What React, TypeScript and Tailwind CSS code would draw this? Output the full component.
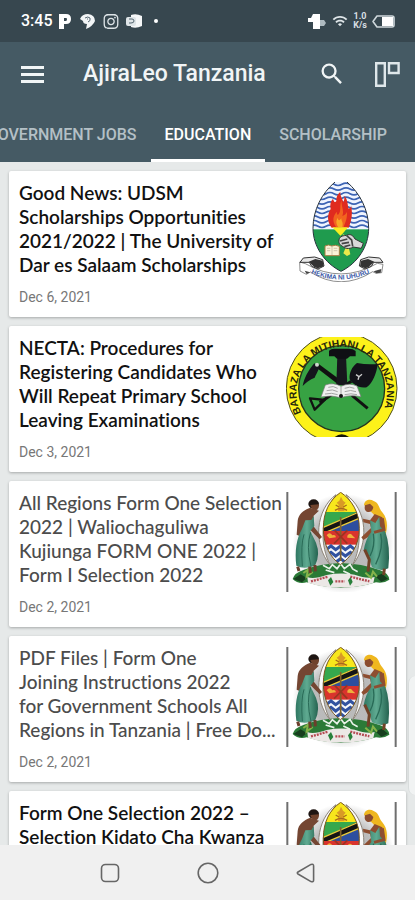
import { MdSearch, MdWifi } from "react-icons/md";
import { FaInstagram } from "react-icons/fa";

const tabs = ["GOVERNMENT JOBS", "EDUCATION", "SCHOLARSHIP"];

const posts = [
  {
    title: "Good News: UDSM\nScholarships Opportunities\n2021/2022 | The University of\nDar es Salaam Scholarships",
    date: "Dec 6, 2021",
    image: "udsm",
    read: false,
  },
  {
    title: "NECTA: Procedures for\nRegistering Candidates Who\nWill Repeat Primary School\nLeaving Examinations",
    date: "Dec 3, 2021",
    image: "necta",
    read: false,
  },
  {
    title: "All Regions Form One Selection\n2022 | Waliochaguliwa\nKujiunga FORM ONE 2022 |\nForm I Selection 2022",
    date: "Dec 2, 2021",
    image: "arms",
    read: true,
  },
  {
    title: "PDF Files | Form One\nJoining Instructions 2022\nfor Government Schools All\nRegions in Tanzania | Free Do...",
    date: "Dec 2, 2021",
    image: "arms",
    read: true,
  },
  {
    title: "Form One Selection 2022 –\nSelection Kidato Cha Kwanza",
    date: "",
    image: "arms",
    read: false,
  },
];

const UdsmLogo = () => (
  <svg viewBox="18 51 336 300" className="my-px h-[100px] w-28 shrink-0" aria-hidden="true">
    <defs>
      <clipPath id="udsm-shield">
        <path d="M183 38 C130 75 99 130 99 190 C99 245 135 295 183 319 C232 295 266 245 266 190 C266 130 236 75 183 38Z" />
      </clipPath>
    </defs>
    <g clipPath="url(#udsm-shield)">
      <rect x="90" y="30" width="185" height="165" fill="#f0f5ff" />
      {[58, 72, 86, 100, 114, 128, 142, 156, 170, 184].map((y) => (
        <path
          key={y}
          d={`M90 ${y} q12 -7 24 0 t24 0 t24 0 t24 0 t24 0 t24 0 t24 0 t24 0`}
          fill="none"
          stroke="#3c63b4"
          strokeWidth="5"
        />
      ))}
      <rect x="90" y="193" width="185" height="130" fill="#1f9b4e" />
    </g>
    <path
      d="M165 51 C125 85 99 135 99 190 C99 245 135 295 183 319 C232 295 266 245 266 190 C266 135 240 85 201 51"
      fill="none"
      stroke="#27323d"
      strokeWidth="3"
    />
    {/* torch flame */}
    <path
      d="M155 188 C140 168 142 148 152 132 C149 118 152 109 159 101 C162 112 166 114 169 108 C168 96 173 87 181 80 C180 94 187 98 190 112 C193 104 194 99 193 92 C204 103 202 119 206 131 C211 130 213 126 213 121 C219 146 214 170 206 188 Z"
      fill="#e02b1f"
    />
    <path d="M168 186 C155 166 160 153 170 140 C171 153 176 152 180 139 C182 127 180 118 184 106 C185 128 193 140 187 153 C194 150 198 147 201 141 C202 164 194 175 191 187Z" fill="#f2641f" />
    <path d="M175 187 C166 172 169 166 173 158 C174 167 179 168 184 160 C184 171 191 170 187 187Z" fill="#f9a825" />
    <path d="M157 187 L204 187 L187 207 L181 212Z" fill="#f7ee20" />
    <path d="M188 207 L198 212 L211 268 L201 273 L190 265 L199 243Z" fill="#e8e94a" />
    {/* hand holding the torch */}
    <path
      d="M178 221 C181 213 190 212 200 211 C213 205 220 213 225 222 L250 235 L244 250 L219 246 C208 254 192 250 187 243 C177 240 175 231 178 221Z"
      fill="#d8d8d8"
      stroke="#333"
      strokeWidth="3"
    />
    <path d="M180 228 L202 222 M185 236 L207 232 M193 245 L211 240 M200 212 L215 225 L218 244" fill="none" stroke="#444" strokeWidth="5" />
    {/* book */}
    <path d="M135 243 Q146 237 155 243 Q166 238 178 244 V272 H135Z" fill="#fbf3d8" stroke="#a67c42" strokeWidth="3" />
    <path d="M156 243 V270 M141 250 H151 M141 257 H151 M161 250 H172 M161 257 H172" stroke="#b9b09a" strokeWidth="2" />
    {/* ribbon */}
    <path
      d="M59 291 L76 296 Q183 358 292 295 L309 298 L305 323 L288 325 L278 320 Q183 380 91 321 L79 328 L60 318Z"
      fill="#fff"
      stroke="#555"
      strokeWidth="2"
    />
    <path d="M70 279 L104 276 L128 284 L132 303 L114 312 L95 304 L88 292 L60 292Z" fill="#e8e8e8" stroke="#333" strokeWidth="3" />
    <path d="M86 290 L106 282 L128 287 L131 304 L113 310 L103 306Z" fill="#333" />
    <path d="M299 279 L266 276 L242 284 L238 303 L255 312 L274 304 L281 292 L309 292Z" fill="#e8e8e8" stroke="#333" strokeWidth="3" />
    <path d="M243 287 L264 282 L283 290 L266 306 L256 310 L240 304Z" fill="#333" />
    <path d="M74 317 L90 322 L80 327Z M281 319 L304 312 L302 323 L289 325Z" fill="#444" />
    <path id="udsm-motto" d="M93 325 Q183 363 272 323" fill="none" />
    <text fill="#3d5aa8" className="font-['Liberation_Sans'] text-[20px] font-bold">
      <textPath href="#udsm-motto">HEKIMA NI UHURU</textPath>
    </text>
  </svg>
);

const NectaLogo = () => (
  <svg viewBox="18 43 336 300" className="my-px h-[100px] w-28 shrink-0" aria-hidden="true">
    <circle cx="185" cy="197" r="166" fill="#fdf21a" stroke="#4c4c20" strokeWidth="3" />
    <circle cx="185" cy="198" r="129" fill="#37a243" stroke="#24351f" strokeWidth="4" />
    <path id="necta-ring" d="M64 271 A136 136 0 1 1 306 271" fill="none" />
    <text fill="#27270c" className="font-['Liberation_Sans'] text-[31px] font-bold">
      <textPath href="#necta-ring">BARAZA LA MITIHANI LA TANZANIA</textPath>
    </text>
    {/* hoe */}
    <path d="M102 129 L112 121 L184 174 L176 186Z" fill="#111" />
    <path d="M68 190 C72 168 84 144 103 122 L119 134 C113 147 107 158 104 165 Q83 173 68 190Z" fill="#15151d" />
    <circle cx="111" cy="126" r="6" fill="#cfd8cf" />
    {/* spade */}
    <path d="M209 170 C207 151 216 132 231 121 Q261 127 293 124 C290 151 278 182 260 194 Q238 198 217 180Z" fill="#121219" />
    <path d="M228 156 L237 162 L246 155 M237 162 L234 171" stroke="#cfcfcf" strokeWidth="4" fill="none" />
    <path d="M214 176 L119 240" stroke="#111" strokeWidth="9" />
    <path d="M90 227 L134 232 L104 261Z" fill="none" stroke="#111" strokeWidth="7" strokeLinejoin="round" />
    <path d="M216 218 L263 257" stroke="#111" strokeWidth="9" />
    {/* hammer */}
    <path d="M172 99 H198 L202 187 H169Z" fill="#17171d" />
    <path d="M147 84 Q154 77 165 78 H206 Q220 78 227 85 V101 H210 L201 108 H171 L163 101 H147Z" fill="#0f0f14" />
    {/* open book */}
    <path d="M136 187 Q161 178 183 191 Q208 179 231 190 L243 222 Q208 215 183 225 Q153 216 123 223Z" fill="#efefef" stroke="#777" strokeWidth="2" />
    <path d="M183 191 V223 M145 194 Q160 188 173 197 M140 204 Q158 198 173 207 M135 214 Q156 209 173 216 M194 197 Q210 190 223 197 M194 207 Q213 200 228 207 M194 216 Q213 211 231 216" fill="none" stroke="#a4a4a4" strokeWidth="3" />
    <circle cx="183" cy="220" r="6" fill="#111" />
    <path d="M164 343 Q185 327 207 343Z" fill="#15150a" />
  </svg>
);

const CoatOfArms = () => (
  <svg viewBox="18 43 336 300" className="my-px h-[100px] w-28 shrink-0" aria-hidden="true">
    <defs>
      <clipPath id="arms-shield">
        <path d="M182 44 C148 67 130 104 130 152 C130 202 151 240 181 261 C212 240 238 202 238 152 C238 104 216 67 182 44Z" />
      </clipPath>
      <radialGradient id="arms-shade">
        <stop offset="60%" stopColor="#8d8d8d" />
        <stop offset="100%" stopColor="#ffffff" />
      </radialGradient>
      <linearGradient id="arms-dress">
        <stop offset="0%" stopColor="#2f7762" />
        <stop offset="50%" stopColor="#5faa91" />
        <stop offset="100%" stopColor="#256350" />
      </linearGradient>
    </defs>
    <ellipse cx="190" cy="198" rx="152" ry="150" fill="url(#arms-shade)" opacity="0.6" />
    <path d="M22 43 V343 M347 43 V343" stroke="#6f6f6f" strokeWidth="6" />
    {/* mountain and motto ribbon */}
    <path d="M38 304 Q43 285 72 276 Q120 258 182 256 Q245 258 299 277 Q326 286 328 306 Q310 319 288 314 Q182 346 80 314 Q54 320 38 304Z" fill="#2b7a37" />
    <path d="M40 304 L62 290 L80 301 L66 314Z M286 296 L306 288 L324 303 L304 313Z" fill="#173e1e" />
    <path d="M82 298 Q100 306 140 292 Q182 284 224 291 Q260 304 284 298 L280 316 Q230 331 182 329 Q130 331 84 315Z" fill="#ece8e6" />
    <path d="M93 311 L145 297 M211 297 L268 311 M166 311 H194" stroke="#b44b53" strokeWidth="7" strokeDasharray="6 3" />
    <path d="M144 308 L153 298 L160 313 L151 324Z M204 308 L212 298 L218 313 L210 324Z" fill="#28803b" />
    <path d="M129 263 L148 273 L157 261 L171 273 L182 258 L193 273 L210 260 L218 274 L233 282 M137 277 L163 285 M190 280 L210 290" stroke="#e9f2e9" strokeWidth="5" fill="none" />
    <path d="M70 286 L84 276 L80 297 L98 283 M256 285 L273 300 L279 282 L291 297" stroke="#85b34a" strokeWidth="6" fill="none" />
    {/* tusks */}
    <path d="M168 51 C108 95 97 198 151 263 C121 205 117 124 168 51Z" fill="#fafafa" stroke="#8d8478" strokeWidth="3" />
    <path d="M198 51 C262 95 269 198 217 263 C247 205 247 124 198 51Z" fill="#fafafa" stroke="#8d8478" strokeWidth="3" />
    {/* shield */}
    <g clipPath="url(#arms-shield)">
      <rect x="125" y="40" width="118" height="65" fill="#f8e71c" />
      <rect x="125" y="103" width="118" height="60" fill="#35a84d" />
      <path d="M125 163 L242 105 V165Z" fill="#2d4e9e" />
      <path d="M125 152 L242 98 V120 L125 171Z" fill="#151515" />
      <path d="M125 151 L242 101 M125 169 L242 120" stroke="#eacb3a" strokeWidth="4" />
      <rect x="125" y="160" width="118" height="43" fill="#d9332d" />
      <rect x="125" y="201" width="118" height="62" fill="#f5f7fb" />
      {[211, 230, 249].map((y) => (
        <path
          key={y}
          d={`M124 ${y - 6} l14 11 l15 -11 l14 11 l15 -11 l14 11 l15 -11 l14 11 l15 -11`}
          fill="none"
          stroke="#3152a0"
          strokeWidth="9"
        />
      ))}
      <path d="M140 173 q9 -12 17 0 q9 -4 11 6 l-20 3Z M202 174 q8 -12 16 0 l8 8 l-24 -2Z" fill="#efb13c" />
      <path d="M182 118 V250" stroke="#80622c" strokeWidth="5" />
      <path d="M162 198 L202 158 M164 158 L202 198" stroke="#9a3522" strokeWidth="5" />
    </g>
    <path d="M182 44 C148 67 130 104 130 152 C130 202 151 240 181 261 C212 240 238 202 238 152 C238 104 216 67 182 44Z" fill="none" stroke="#7a581e" strokeWidth="3" />
    <path d="M174 101 L176 81 L170 75 L178 69 L183 57 L189 69 L197 75 L191 82 L194 101Z" fill="#d99a25" />
    <path d="M165 98 Q183 86 201 98 M167 82 L177 88 M200 82 L190 88" stroke="#a86a1b" strokeWidth="4" fill="none" />
    {/* man */}
    <ellipse cx="101" cy="79" rx="16" ry="14" fill="#1e1512" />
    <path d="M91 82 Q95 98 108 98 Q118 94 117 80Z" fill="#70422c" />
    <path d="M91 90 C70 98 55 110 53 130 L50 171 L65 178 L91 157 L119 185 L126 178 L98 143 L101 114 L117 99 L107 96Z" fill="#744632" />
    <path d="M76 128 L66 154 C49 182 44 222 49 264 Q71 276 105 264 Q122 230 108 195 L91 160 L103 145 L101 115 L94 127Z" fill="url(#arms-dress)" />
    <path d="M72 170 Q62 200 67 266 M92 164 Q78 205 93 266" stroke="#296b57" strokeWidth="3" fill="none" />
    <path d="M89 267 L91 286 M105 262 L106 281 M53 267 L57 280" stroke="#6b3f2c" strokeWidth="9" />
    {/* woman */}
    <path d="M252 82 C253 67 270 62 281 70 C298 76 296 93 308 105 C322 122 324 145 317 169 L301 137 L279 108Z" fill="#efb71f" />
    <path d="M255 83 Q251 99 263 103 Q277 105 280 88 L270 78Z" fill="#8b4c2f" />
    <path d="M249 123 L270 128 L284 109 L307 119 L312 156 L294 159 L250 187 L244 179 L273 151 L270 139 L250 134Z" fill="#8d4e31" />
    <path d="M270 128 L286 136 L298 117 L300 146 L316 162 Q332 205 325 272 Q303 283 276 269 Q265 231 251 218 Q257 183 274 163Z" fill="url(#arms-dress)" />
    <path d="M302 168 Q312 210 287 260 M280 168 Q286 206 270 235" stroke="#296b57" strokeWidth="4" fill="none" />
    <path d="M307 122 L312 156 L282 164" stroke="#8d4e31" strokeWidth="9" fill="none" />
    <path d="M254 216 L268 246 L264 282 M313 273 L311 292" stroke="#724227" strokeWidth="9" fill="none" />
  </svg>
);

const PostImage = ({ name }: { name: string }) => {
  if (name === "udsm") return <UdsmLogo />;
  if (name === "necta") return <NectaLogo />;
  return <CoatOfArms />;
};

const StatusBar = () => (
  <div className="flex h-[42px] shrink-0 items-center justify-between bg-[#37474f] pr-5 pl-[21px] text-white">
    <div className="flex items-center">
      <span className="text-base font-medium">3:45</span>
      <svg viewBox="0 0 12 15" className="ml-[6px] h-[15px] w-3">
        <path fillRule="evenodd" d="M0 0 H7 Q12 0 12 5 Q12 10 7 10 H5 V15 H0Z M5 4 V7 H7 Q8 7 8 5 Q8 4 7 4Z" fill="#fff" />
      </svg>
      <svg viewBox="0 0 15 16" className="ml-[9px] h-4 w-[15px]">
        <path d="M0 6 Q2 1 8 1 Q15 2 15 8 Q13 13 6 16 L7 11 Q3 11 3 8Z" fill="#f2f5f6" />
        <path d="M5 5 Q8 3 10 5 Q11 8 8 9 M7 6 H8" stroke="#536570" strokeWidth="1" fill="none" />
      </svg>
      <FaInstagram className="ml-2 h-[17px] w-4 text-[#dce3e6]" />
      <svg viewBox="0 0 16 14" className="ml-[7px] h-[14px] w-4">
        <path d="M5 1 Q10 -1 16 2 V12 Q10 15 5 13Z" fill="#f5f7f8" />
        <rect y="3" width="10" height="9" rx="2" fill="#dfe5e8" />
        <path d="M3 5 H6 Q8 5 8 7 Q8 9 5 9 H3" stroke="#53656f" fill="none" />
      </svg>
      <span className="ml-3 h-1 w-1 rounded-full bg-white" />
    </div>
    <div className="flex items-center">
      <svg viewBox="0 0 18 15" className="h-[15px] w-[18px]">
        <path d="M5 0 H12 V15 H5 V8 H0 V4 H3Z" fill="#fff" />
        <path d="M12 6 H16 L18 9 L16 12 H12Z" fill="#aebac0" />
      </svg>
      <MdWifi className="ml-[6px] h-4 w-4 text-[#dfe6e9]" />
      <span className="ml-1 w-4 text-center text-[9px] leading-[9px] font-bold text-[#d7dfe3]">
        1.0
        <br />
        K/s
      </span>
      <svg viewBox="0 0 23 13" className="ml-1 h-[13px] w-[23px]">
        <path d="M1 6.5 L5 1 H20 Q22 1 22 3 V10 Q22 12 20 12 H5Z" fill="none" stroke="#cfd8dc" strokeWidth="1.6" strokeLinejoin="round" />
        <rect x="10" y="2" width="11" height="9" fill="#fff" />
      </svg>
    </div>
  </div>
);

const AppBar = () => (
  <header className="shrink-0 bg-[#455a64] text-[#f1f5f6]">
    <div className="flex h-16 items-center pr-[14px] pl-[21px]">
      <button aria-label="Open menu" className="flex w-[23px] flex-col gap-1">
        <span className="h-[3px] bg-[#f1f5f6]" />
        <span className="h-[3px] bg-[#f1f5f6]" />
        <span className="h-[3px] bg-[#f1f5f6]" />
      </button>
      <h1 className="ml-[39px] flex-1 text-[23px] font-medium whitespace-nowrap">AjiraLeo Tanzania</h1>
      <button aria-label="Search">
        <MdSearch className="h-7 w-7" />
      </button>
      <button aria-label="Change layout" className="ml-7">
        <svg viewBox="0 0 27 26" className="h-[26px] w-[27px]" fill="none" stroke="#dfe7ea" strokeWidth="2.4">
          <path d="M2.2 2.2 H10.8 V24.8 H2.2Z M15 2.2 H24.6 V12 H15Z" />
        </svg>
      </button>
    </div>
    <nav className="flex h-14 justify-end overflow-hidden pr-[14px]">
      {tabs.map((tab) => (
        <a
          key={tab}
          href="#"
          className={
            tab === "EDUCATION"
              ? "flex shrink-0 items-center border-b-[3px] border-white px-[14px] pt-1 text-base font-medium text-white"
              : "flex shrink-0 items-center border-b-[3px] border-transparent px-[14px] pt-1 text-base font-medium text-[#b4c0c6]"
          }
        >
          {tab}
        </a>
      ))}
    </nav>
  </header>
);

const PostCard = ({ title, date, image, read }: (typeof posts)[number]) => (
  <article className="flex shrink-0 items-start justify-between rounded-xs bg-white pt-[10px] pr-2 pb-3 pl-[10px] shadow-[0_1px_3px_rgba(0,0,0,0.28)]">
    <div className="w-0 flex-1">
      <h2
        className={
          read
            ? "font-[Lato,sans-serif] text-[19px] leading-6 font-medium whitespace-pre text-[#4c4c4c] [font-variant-ligatures:none]"
            : "font-[Lato,sans-serif] text-[19px] leading-6 font-semibold whitespace-pre text-[#111111] [font-variant-ligatures:none]"
        }
      >
        {title}
      </h2>
      <p className="mt-3 text-sm leading-4 text-[#777777]">{date}</p>
    </div>
    <PostImage name={image} />
  </article>
);

const SystemNav = () => (
  <div className="flex h-[55px] shrink-0 items-center justify-center gap-[74px] bg-[#f0f0f0]">
    <button aria-label="Recent apps">
      <svg viewBox="0 0 24 24" className="h-6 w-6" fill="none" stroke="#666" strokeWidth="1.6">
        <rect x="3.5" y="3.5" width="17" height="17" rx="4" />
      </svg>
    </button>
    <button aria-label="Home">
      <svg viewBox="0 0 24 24" className="h-6 w-6" fill="none" stroke="#666" strokeWidth="1.6">
        <circle cx="12" cy="12" r="9.8" />
      </svg>
    </button>
    <button aria-label="Back">
      <svg viewBox="0 0 24 24" className="h-6 w-6" fill="none" stroke="#666" strokeWidth="1.6" strokeLinejoin="round">
        <path d="M4 11 L17 3.4 Q19.6 2.6 19.6 5 V19 Q19.6 21.4 17 20.6 L4 13 Q2.6 12 4 11Z" />
      </svg>
    </button>
  </div>
);

export default function App() {
  return (
    <div className="relative flex h-screen flex-col overflow-hidden font-[Roboto,sans-serif]">
      <StatusBar />
      <AppBar />
      <main className="flex min-h-0 flex-1 flex-col gap-[9px] overflow-hidden bg-[#e6e9e9] px-[9px] pt-[9px]">
        {posts.map((post, index) => (
          <PostCard key={index} {...post} />
        ))}
      </main>
      <SystemNav />
      {/* edge panel handle */}
      <div className="absolute right-0 bottom-[105px] h-[119px] w-[7px] rounded-l-full border-l border-[#d9dddd] bg-[#f1f3f3]" />
    </div>
  );
}
